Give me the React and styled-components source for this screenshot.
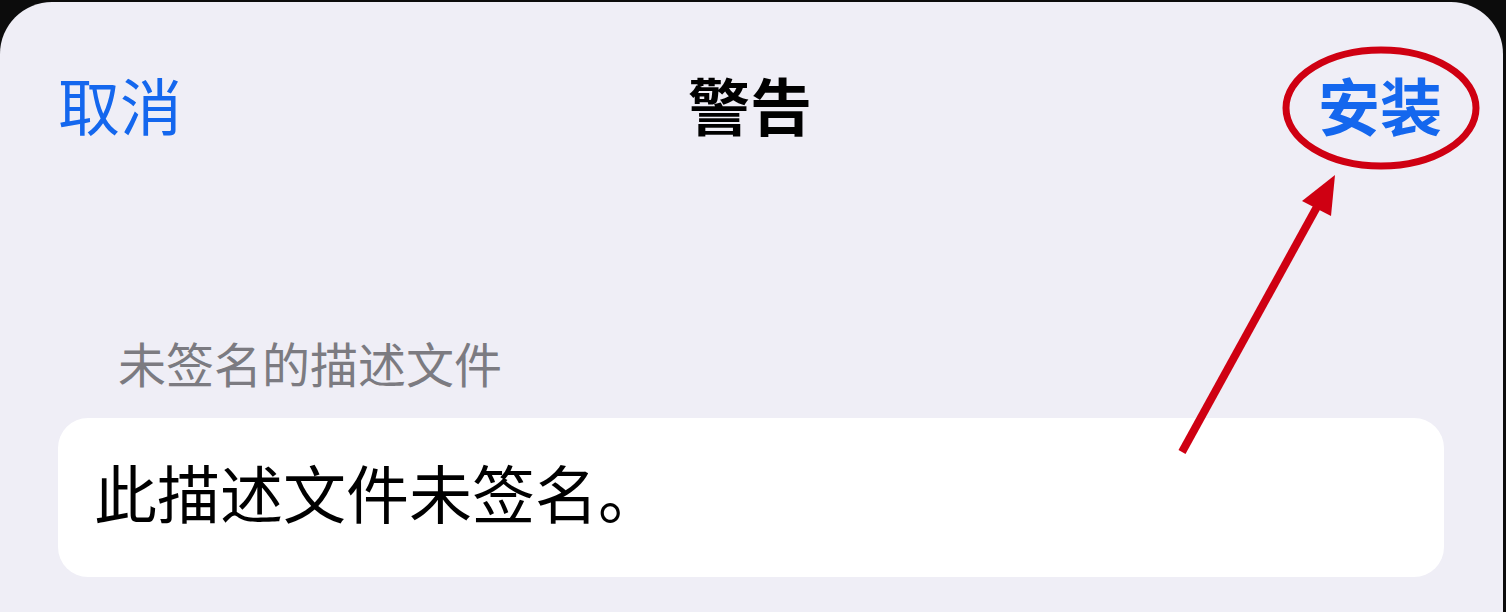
import React from "react";
import styled, { createGlobalStyle } from "styled-components";

const GlobalStyle = createGlobalStyle`
  html, body {
    margin: 0;
    padding: 0;
    background: #0c0c0c;
  }
  body {
    font-family: "Noto Sans CJK SC", "Noto Sans", sans-serif;
  }
`;

const Screen = styled.div`
  width: 1506px;
  height: 612px;
  box-sizing: border-box;
  padding: 2px 3px 0 0;
  background: #0c0c0c;
  overflow: hidden;
`;

const Sheet = styled.div`
  position: relative;
  height: 610px;
  background: #efeef6;
  border-radius: 52px 52px 0 0;
  overflow: hidden;
`;

const NavBar = styled.div`
  display: grid;
  grid-template-columns: 1fr auto 1fr;
  align-items: center;
  padding: 67px 61px 0 58px;
  height: 70px;
`;

const NavButton = styled.span`
  font-size: 62px;
  line-height: 70px;
  color: #1467ee;
  font-weight: ${(p) => (p.$strong ? 600 : 400)};
  justify-self: ${(p) => (p.$end ? "end" : "start")};
`;

const NavTitle = styled.span`
  font-size: 62px;
  line-height: 70px;
  font-weight: 700;
  color: #000;
`;

const Section = styled.section`
  margin-top: 195px;
  padding: 0 59px 0 58px;
`;

const SectionHeader = styled.div`
  padding-left: 60px;
  font-size: 48px;
  line-height: 56px;
  color: #7c7b81;
  margin-bottom: 28px;
`;

const Card = styled.div`
  background: #fff;
  border-radius: 30px;
  padding: 38px 36px 51px;
  font-size: 63px;
  line-height: 70px;
  color: #000;
`;

const Annotation = styled.svg`
  position: absolute;
  left: 0;
  top: -2px;
  width: 1506px;
  height: 612px;
  pointer-events: none;
`;

export default function App() {
  return (
    <>
      <GlobalStyle />
      <Screen>
        <Sheet>
          <NavBar>
            <NavButton>取消</NavButton>
            <NavTitle>警告</NavTitle>
            <NavButton $strong $end>
              安装
            </NavButton>
          </NavBar>
          <Section>
            <SectionHeader>未签名的描述文件</SectionHeader>
            <Card>此描述文件未签名。</Card>
          </Section>
          <Annotation viewBox="0 0 1506 612">
            <ellipse
              cx="1381"
              cy="108"
              rx="95"
              ry="58"
              fill="none"
              stroke="#cf0012"
              strokeWidth="7"
            />
            <line
              x1="1182"
              y1="452"
              x2="1318"
              y2="205"
              stroke="#cf0012"
              strokeWidth="8"
            />
            <polygon points="1335,175 1302,201 1331,216" fill="#cf0012" />
          </Annotation>
        </Sheet>
      </Screen>
    </>
  );
}
